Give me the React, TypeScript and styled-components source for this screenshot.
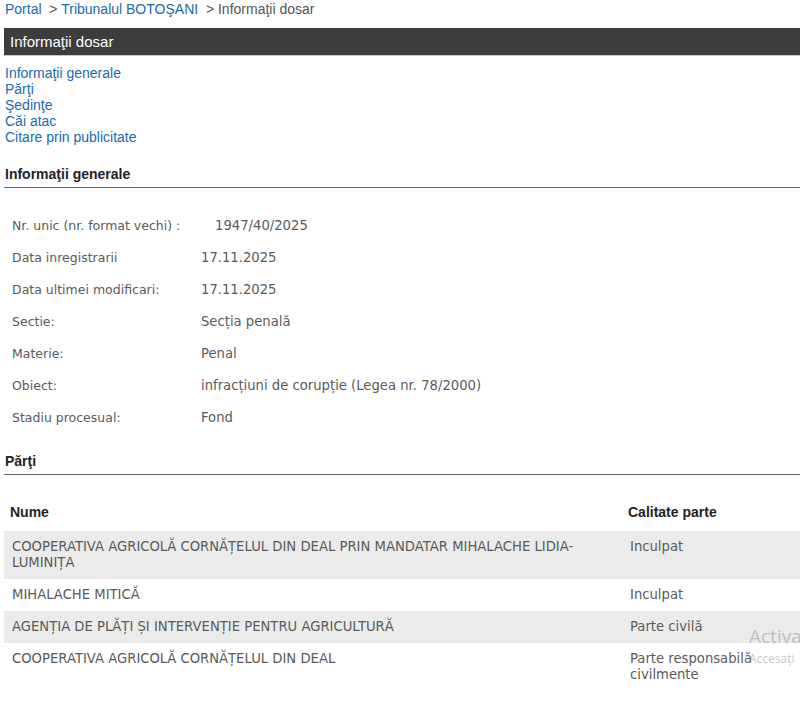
import styled, { createGlobalStyle } from 'styled-components';

type InfoRow = {
  label: string;
  value: string;
};

type Party = {
  name: string;
  quality: string;
};

const links = [
  'Informaţii generale',
  'Părţi',
  'Şedinţe',
  'Căi atac',
  'Citare prin publicitate',
];

const firstRow: InfoRow = {
  label: 'Nr. unic (nr. format vechi) :',
  value: '1947/40/2025',
};

const infoRows: InfoRow[] = [
  { label: 'Data inregistrarii', value: '17.11.2025' },
  { label: 'Data ultimei modificari:', value: '17.11.2025' },
  { label: 'Sectie:', value: 'Secția penală' },
  { label: 'Materie:', value: 'Penal' },
  { label: 'Obiect:', value: 'infracțiuni de corupție (Legea nr. 78/2000)' },
  { label: 'Stadiu procesual:', value: 'Fond' },
];

const parties: Party[] = [
  {
    name: 'COOPERATIVA AGRICOLĂ CORNĂȚELUL DIN DEAL PRIN MANDATAR MIHALACHE LIDIA-LUMINIȚA',
    quality: 'Inculpat',
  },
  { name: 'MIHALACHE MITICĂ', quality: 'Inculpat' },
  { name: 'AGENȚIA DE PLĂȚI ȘI INTERVENȚIE PENTRU AGRICULTURĂ', quality: 'Parte civilă' },
  { name: 'COOPERATIVA AGRICOLĂ CORNĂȚELUL DIN DEAL', quality: 'Parte responsabilă civilmente' },
];

export default function App() {
  return (
    <>
      <GlobalStyle />
      <Page>
        <Breadcrumb>
          <a>Portal</a>&nbsp; <Sep>&gt;</Sep> <a>Tribunalul BOTOŞANI</a>&nbsp; <Sep>&gt;</Sep>{' '}
          <span>Informaţii dosar</span>
        </Breadcrumb>
        <TitleBar>Informaţii dosar</TitleBar>
        <NavList>
          {links.map(link => (
            <li key={link}>
              <a>{link}</a>
            </li>
          ))}
        </NavList>

        <SectionTitle>Informaţii generale</SectionTitle>
        <InfoTable>
          <InfoLine labelWidth={203}>
            <Label>{firstRow.label}</Label>
            <Value>{firstRow.value}</Value>
          </InfoLine>
          {infoRows.map(row => (
            <InfoLine key={row.label} labelWidth={189}>
              <Label>{row.label}</Label>
              <Value>{row.value}</Value>
            </InfoLine>
          ))}
        </InfoTable>

        <SectionTitle>Părţi</SectionTitle>
        <PartyTable>
          <thead>
            <tr>
              <th>Nume</th>
              <th>Calitate parte</th>
            </tr>
          </thead>
          <tbody>
            {parties.map((party, i) => (
              <PartyRow key={party.name + i} striped={i % 2 === 0}>
                <td>{party.name}</td>
                <td>{party.quality}</td>
              </PartyRow>
            ))}
          </tbody>
        </PartyTable>
      </Page>
      <Watermark>
        <strong>Activa</strong>
        <span>Accesați</span>
      </Watermark>
    </>
  );
}

const GlobalStyle = createGlobalStyle`
  html, body {
    margin: 0;
    padding: 0;
    background: #ffffff;
    overflow: hidden;
  }
  body {
    font-family: "Liberation Sans", Arial, sans-serif;
    font-size: 14px;
    color: #555555;
  }
`;

const Page = styled.div`
  width: 800px;
  padding-left: 4px;
  box-sizing: border-box;
`;

const Breadcrumb = styled.div`
  padding: 1px 0 0 1px;
  line-height: 16px;
  font-size: 14px;
  color: #555555;

  a {
    color: #1a6aae;
    text-decoration: none;
  }
`;

const Sep = styled.span`
  color: #555555;
`;

const TitleBar = styled.div`
  margin-top: 11px;
  height: 27px;
  line-height: 27px;
  padding-left: 6px;
  background-color: #3d3d3d;
  border-bottom: 1px solid #c9c9c9;
  color: #ffffff;
  font-size: 15px;
`;

const NavList = styled.ul`
  list-style: none;
  margin: 9px 0 0;
  padding: 0 0 0 1px;

  li {
    line-height: 16px;
    font-size: 14px;
  }

  a {
    color: #1a6aae;
    text-decoration: none;
  }
`;

const SectionTitle = styled.h3`
  margin: 21px 0 0;
  padding: 0 0 5px 1px;
  line-height: 16px;
  font-size: 14px;
  font-weight: bold;
  color: #222222;
  border-bottom: 1px solid #666666;
`;

const InfoTable = styled.div`
  display: flex;
  flex-direction: column;
  margin-top: 21px;
  margin-bottom: -1px;
`;

interface InfoLineProps {
  labelWidth: number;
}

const InfoLine = styled.div<InfoLineProps>`
  display: grid;
  grid-template-columns: ${({ labelWidth }) => labelWidth}px 1fr;
  height: 32px;
  align-items: center;
  padding-left: 8px;
  font-family: "DejaVu Sans", Verdana, sans-serif;
  color: #5a5a5a;
`;

const Label = styled.span`
  font-size: 12.5px;
`;

const Value = styled.span`
  font-size: 13.2px;
`;

const PartyTable = styled.table`
  width: 796px;
  margin-top: 20px;
  border-collapse: collapse;
  font-family: "DejaVu Sans", Verdana, sans-serif;
  font-size: 13.2px;
  color: #5a5a5a;

  th {
    height: 34px;
    padding: 0 6px 2px;
    text-align: left;
    font-family: "Liberation Sans", Arial, sans-serif;
    font-size: 14px;
    font-weight: bold;
    color: #222222;
  }

  th:first-child {
    width: 606px;
  }

  td {
    padding: 8px 8px;
    line-height: 16px;
    vertical-align: top;
  }

  td:first-child {
    padding-right: 30px;
  }
`;

interface PartyRowProps {
  striped: boolean;
}

const PartyRow = styled.tr<PartyRowProps>`
  background-color: ${({ striped }) => (striped ? '#ebebeb' : 'transparent')};
`;

const Watermark = styled.div`
  position: absolute;
  left: 749px;
  top: 624px;
  display: flex;
  flex-direction: column;
  gap: 4px;
  pointer-events: none;
  font-family: "Open Sans", "DejaVu Sans", sans-serif;
  color: rgba(160, 160, 160, 0.6);
  white-space: nowrap;

  strong {
    font-weight: normal;
    font-size: 19px;
    line-height: 24px;
  }

  span {
    font-size: 12px;
    line-height: 14px;
  }
`;
